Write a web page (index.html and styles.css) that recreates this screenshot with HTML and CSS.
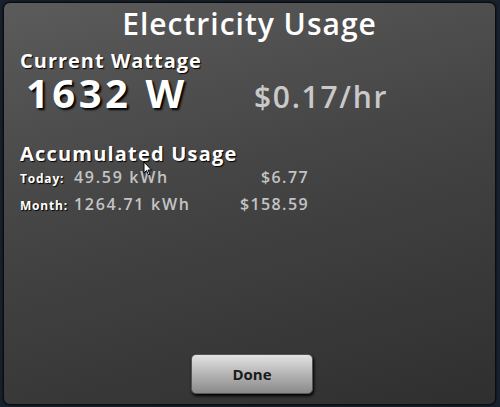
FILE: index.html
```html
<!DOCTYPE html>
<html lang="en">
    <head>
        <meta charset="utf-8">
        <link rel="stylesheet" href="styles.css">
    </head>
    <body>
        <div class="panel">
            <h1 class="title">Electricity Usage</h1>

            <h2 class="heading">Current Wattage</h2>
            <div class="current">
                <span class="watts">1632 W</span>
                <span class="rate">$0.17/hr</span>
            </div>

            <h2 class="heading accum">Accumulated Usage</h2>
            <div class="row">
                <span class="label">Today:</span>
                <span class="kwh">49.59 kWh</span>
                <span class="cost">$6.77</span>
            </div>
            <div class="row">
                <span class="label">Month:</span>
                <span class="kwh">1264.71 kWh</span>
                <span class="cost">$158.59</span>
            </div>

            <div class="footer">
                <button class="done">Done</button>
            </div>

            <svg class="cursor" width="10" height="16" viewBox="0 0 10 16">
                <path d="M1 1 L1 12 L3.5 9.5 L5.5 14 L7 13.3 L5 9 L8.5 9 Z" fill="#fff" stroke="#000" stroke-width="1"/>
            </svg>
        </div>
    </body>
</html>
```

FILE: styles.css
```css
* {
    margin: 0;
    padding: 0;
}
html, body {
    width: 500px;
    height: 407px;
    overflow: hidden;
}
body {
    background: #17202c;
    font-family: "Open Sans", "DejaVu Sans", sans-serif;
}
.panel {
    position: relative;
    box-sizing: border-box;
    height: 403px;
    margin: 2px 4px 2px 3px;
    border: 1px solid #0c0c0c;
    border-radius: 7px;
    background: linear-gradient(165deg, #5b5b5b 0%, #444 45%, #2f2f2f 100%);
    box-shadow: 0 0 2px #000;
    display: flex;
    flex-direction: column;
    padding: 0 16px;
}
.title {
    color: #fff;
    font-size: 30px;
    font-weight: 600;
    text-align: center;
    line-height: 40px;
    margin-top: 1px;
    letter-spacing: 1px;
}
.heading {
    color: #fff;
    font-size: 20px;
    font-weight: 700;
    line-height: 24px;
    text-shadow: 1px 1px 1px #000;
    letter-spacing: 1px;
    margin-top: 5px;
}
.heading.accum {
    margin-top: 29px;
    letter-spacing: 1.2px;
}
.current {
    display: flex;
    align-items: baseline;
    height: 40px;
}
.watts {
    color: #fff;
    font-size: 40px;
    font-weight: 700;
    line-height: 40px;
    padding-left: 6px;
    width: 228px;
    text-shadow: 2px 2px 2px #000;
    letter-spacing: 3.5px;
}
.rate {
    color: #c9c9c9;
    font-size: 30px;
    font-weight: 600;
    letter-spacing: 1.7px;
}
.row {
    display: flex;
    align-items: baseline;
    height: 27px;
}
.label {
    color: #fff;
    font-size: 12px;
    font-weight: 700;
    width: 54px;
    letter-spacing: 0.8px;
    text-shadow: 1px 1px 1px #000;
}
.kwh {
    color: #c4c4c4;
    font-size: 16px;
    font-weight: 600;
    width: 160px;
    letter-spacing: 1.7px;
}
.cost {
    color: #c4c4c4;
    font-size: 16px;
    font-weight: 600;
    width: 75px;
    text-align: right;
    letter-spacing: 1.4px;
}
.footer {
    margin-top: auto;
    display: flex;
    justify-content: center;
    padding-bottom: 10px;
}
.done {
    width: 122px;
    height: 40px;
    border: 1px solid #555;
    border-radius: 5px;
    background: linear-gradient(#e2e2e2, #b5b5b5 50%, #8a8a8a);
    box-shadow: 1px 2px 3px #000;
    font-family: "Open Sans", "DejaVu Sans", sans-serif;
    font-size: 15px;
    font-weight: 700;
    color: #1a1a1a;
    margin-left: 5px;
}
.cursor {
    position: absolute;
    left: 139px;
    top: 158px;
}
```
